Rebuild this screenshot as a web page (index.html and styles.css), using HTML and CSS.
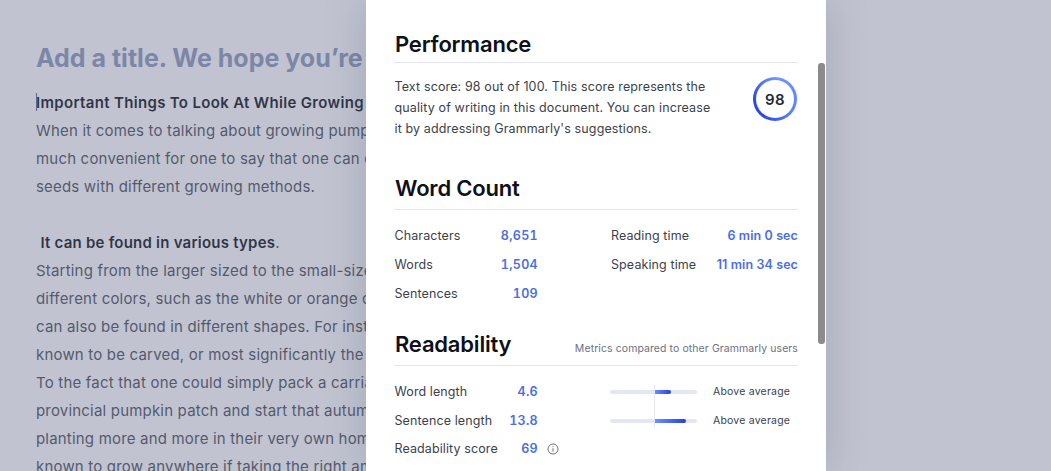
FILE: index.html
```html
<!DOCTYPE html>
<html lang="en">
<head>
  <meta charset="UTF-8">
  <title>Document performance</title>
  <link rel="stylesheet" href="styles.css">
</head>
<body>
  <div class="editor">
    <h1 class="doc-title">Add a title. We hope you’re enjoying this</h1>
    <div class="doc-text">
      <p class="doc-line caret"><b>Important Things To Look At While Growing Pumpkins</b></p>
      <p class="doc-line">When it comes to talking about growing pumpkins, it is not very</p>
      <p class="doc-line">much convenient for one to say that one can do so with the</p>
      <p class="doc-line">seeds with different growing methods.</p>
      <p class="doc-line">&nbsp;</p>
      <p class="doc-line">&nbsp;<b class="tight">It can be found in various types</b>.</p>
      <p class="doc-line">Starting from the larger sized to the small-sized ones, in</p>
      <p class="doc-line">different colors, such as the white or orange ones, they</p>
      <p class="doc-line">can also be found in different shapes. For instance, they are</p>
      <p class="doc-line">known to be carved, or most significantly the jack-o-lantern.</p>
      <p class="doc-line">To the fact that one could simply pack a carriage to the</p>
      <p class="doc-line">provincial pumpkin patch and start that autumn tradition,</p>
      <p class="doc-line">planting more and more in their very own home gardens is</p>
      <p class="doc-line">known to grow anywhere if taking the right amount of care.</p>
    </div>
  </div>

  <svg class="close-icon" width="16" height="16" viewBox="0 0 16 16">
    <path d="M2 2l12 12M14 2L2 14" stroke="#8d90a0" stroke-width="1.6" fill="none"/>
  </svg>
  <div class="backdrop"></div>

  <div class="modal">
    <section class="perf">
      <h2 class="section-title">Performance</h2>
      <div class="perf-body">
        <p class="perf-desc">Text score: 98 out of 100. This score represents the quality of writing in this document. You can increase it by addressing Grammarly's suggestions.</p>
        <div class="score-ring"><span class="score-num">98</span></div>
      </div>
    </section>

    <section class="count">
      <h2 class="section-title tall">Word Count</h2>
      <div class="count-body">
        <div class="count-col left">
          <div class="stat"><span>Characters</span><b>8,651</b></div>
          <div class="stat"><span>Words</span><b>1,504</b></div>
          <div class="stat"><span>Sentences</span><b>109</b></div>
        </div>
        <div class="count-col right">
          <div class="stat"><span>Reading time</span><b>6 min 0 sec</b></div>
          <div class="stat"><span>Speaking time</span><b>11 min 34 sec</b></div>
        </div>
      </div>
    </section>

    <section class="read">
      <div class="section-title tall read-head">
        <h2 class="read-title">Readability</h2>
        <span class="read-note">Metrics compared to other Grammarly users</span>
      </div>
      <div class="read-body">
        <div class="read-col">
          <div class="stat"><span>Word length</span><b>4.6</b></div>
          <div class="stat"><span>Sentence length</span><b>13.8</b></div>
          <div class="stat"><span>Readability score</span><b>69</b></div>
        </div>
        <svg class="info-icon" width="12" height="12" viewBox="0 0 12 12">
          <circle cx="6" cy="6" r="5" fill="none" stroke="#6d717f"/>
          <path d="M6 5.2v3.4M6 3.2v1" stroke="#6d717f" fill="none"/>
        </svg>
        <div class="meter-col">
          <div class="meter-row">
            <div class="meter"><span class="meter-fill short"></span></div>
            <span class="meter-label">Above average</span>
          </div>
          <div class="meter-row">
            <div class="meter"><span class="meter-fill long"></span></div>
            <span class="meter-label">Above average</span>
          </div>
          <div class="meter-axis"></div>
        </div>
      </div>
    </section>

    <div class="scroll-thumb"></div>
  </div>
</body>
</html>
```

FILE: styles.css
```css
html, body {
  height: 100%;
}
body {
  background: #fff;
  color: #0e101a;
  font-family: Inter, "Liberation Sans", sans-serif;
  margin: 0;
  overflow: hidden;
}
p, h1, h2 {
  margin: 0;
}

/* document behind the dialog */
.editor {
  box-sizing: border-box;
  height: 100%;
  overflow: hidden;
  padding: 28px 0 0 36px;
  width: 366px;
}
.doc-title {
  color: #8d98bc;
  font-size: 25px;
  font-weight: 700;
  line-height: 61px;
  white-space: nowrap;
}
.doc-text {
  font-size: 15px;
  letter-spacing: 0.19px;
  line-height: 28px;
}
.doc-line {
  color: #4b4e5c;
  white-space: nowrap;
}
.doc-line b {
  color: #0e101a;
  font-weight: 600;
  letter-spacing: 0.33px;
}
.doc-line b.tight {
  letter-spacing: 0.23px;
}
.caret {
  position: relative;
}
.caret:before {
  background: #5a6488;
  content: "";
  height: 18px;
  left: 0;
  position: absolute;
  top: 4px;
  width: 1px;
}

.close-icon {
  position: absolute;
  left: 995px;
  top: -15px;
}
.backdrop {
  background: rgba(101, 108, 138, 0.4);
  inset: 0;
  position: absolute;
}

/* dialog */
.modal {
  background: #fff;
  bottom: 0;
  box-shadow: 0 0 40px rgba(60, 65, 90, 0.22);
  box-sizing: border-box;
  left: 366px;
  padding: 28px 28px 0;
  position: absolute;
  top: 0;
  width: 460px;
}
.section-title {
  border-bottom: 1px solid #e4e5f2;
  font-size: 22px;
  font-weight: 600;
  height: 34px;
  letter-spacing: -0.2px;
  line-height: 32px;
  padding-left: 1px;
}
.section-title.tall {
  height: 37px;
}
.perf-body {
  align-items: flex-start;
  display: flex;
  justify-content: space-between;
  padding-top: 13px;
}
.perf-desc {
  color: #3c3f4c;
  font-size: 12.5px;
  letter-spacing: 0.13px;
  line-height: 21px;
  padding-left: 0.5px;
  width: 325px;
}
.score-ring {
  align-items: center;
  background: conic-gradient(#6f93ff, #5d83fb 35%, #2b47e4 60%, #2e49e6 75%, #6f93ff);
  border-radius: 50%;
  display: flex;
  height: 44px;
  justify-content: center;
  margin: 1px 1px 0 0;
  width: 44px;
}
.score-num {
  align-items: center;
  background: #fff;
  border-radius: 50%;
  color: #262936;
  display: flex;
  font-size: 15px;
  font-weight: 600;
  height: 38px;
  justify-content: center;
  letter-spacing: 0.3px;
  width: 38px;
}

.count {
  margin-top: 33px;
}
.count-body {
  display: flex;
  justify-content: space-between;
  padding-top: 11px;
}
.count-col.left {
  width: 144px;
}
.count-col.right {
  width: 187px;
}
.stat {
  color: #3c3f4c;
  display: flex;
  font-size: 12.5px;
  justify-content: space-between;
  letter-spacing: 0.1px;
  line-height: 29px;
}
.left .stat span, .read-col .stat span {
  padding-left: 0.5px;
}
.stat b {
  color: #4a6ee0;
  font-weight: 600;
  letter-spacing: 0.3px;
}
.left .stat b, .read-col .stat b {
  font-variant-numeric: tabular-nums;
}
.right .stat b {
  letter-spacing: 0.1px;
}

.read {
  margin-top: 20px;
}
.read-head {
  align-items: flex-start;
  display: flex;
  justify-content: space-between;
}
.read-title {
  font-size: 22px;
  font-weight: 600;
  letter-spacing: -0.2px;
  line-height: 32px;
}
.read-note {
  color: #6d717f;
  font-size: 10.5px;
  font-weight: 400;
  letter-spacing: 0.08px;
  line-height: 24px;
  margin-top: 9px;
}
.read-body {
  display: flex;
  padding-top: 12px;
}
.read-col {
  width: 144px;
}
.read-col .stat {
  line-height: 28.5px;
}
.info-icon {
  margin: 65px 0 0 9px;
}
.meter-col {
  margin: -1px 0 0 51px;
  position: relative;
  width: 187px;
}
.meter-row {
  align-items: center;
  display: flex;
  height: 29px;
}
.meter {
  background: #e4e6f3;
  border-radius: 2px;
  height: 4px;
  position: relative;
  width: 87px;
}
.meter-fill {
  background: linear-gradient(to right, #6f93ff, #2440e0);
  border-radius: 0 2px 2px 0;
  height: 4px;
  left: 44px;
  position: absolute;
  top: 0;
}
.meter-fill.short {
  width: 17px;
}
.meter-fill.long {
  width: 32px;
}
.meter-label {
  color: #3c3f4c;
  font-size: 10.5px;
  letter-spacing: 0.2px;
  margin-left: 16px;
}
.meter-axis {
  background: #e4e6f3;
  height: 43px;
  left: 44px;
  position: absolute;
  top: 8px;
  width: 1px;
}

.scroll-thumb {
  background: #8b8b8b;
  border-radius: 3px;
  height: 281px;
  position: absolute;
  right: 1px;
  top: 63px;
  width: 7px;
}
```
